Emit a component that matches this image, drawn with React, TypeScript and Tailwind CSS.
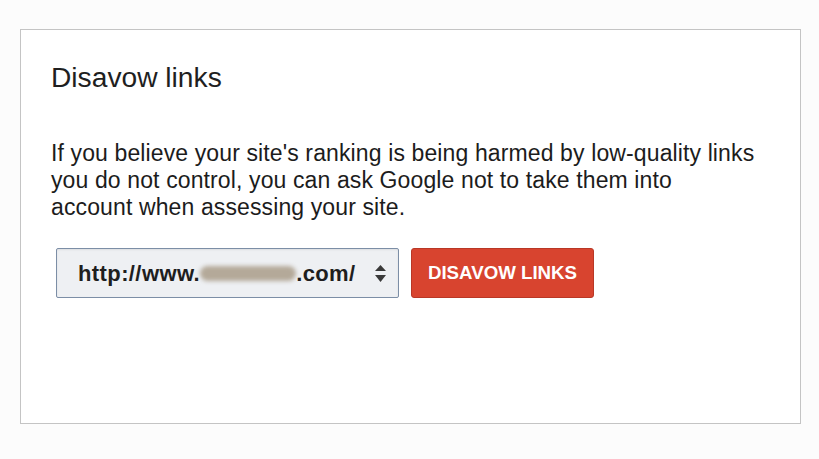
import React from "react";

function SortArrows() {
  return (
    <svg width="11" height="17" viewBox="0 0 11 17" className="shrink-0">
      <path d="M5.5 0 L11 6 L0 6 Z" fill="#3a3a3a" />
      <path d="M0 10 L11 10 L5.5 17 Z" fill="#3a3a3a" />
    </svg>
  );
}

export default function App() {
  return (
    <div
      className="w-[819px] h-[459px] bg-[#fcfcfc] pl-[20px] pt-[29px]"
      style={{ fontFamily: '"Liberation Sans", Arial, sans-serif' }}
    >
      <div className="w-[781px] h-[395px] bg-white border border-[#c4c4c4] pl-[30px] pt-[31px]">
        <h1 className="text-[28.2px] leading-[32px] text-[#1f1f1f]">Disavow links</h1>

        <p className="mt-[47px] text-[23px] leading-[27px] tracking-[0.12px] text-[#1c1c1c] whitespace-nowrap">
          If you believe your site's ranking is being harmed by low-quality links
          <br />
          you do not control, you can ask Google not to take them into
          <br />
          account when assessing your site.
        </p>

        <div className="mt-[27px] ml-[5px] flex items-center gap-[12px]">
          <div className="w-[343px] h-[50px] flex items-center justify-between pl-[21px] pr-[12px] bg-[#eef0f3] border border-[#7c8ea6] rounded-[2px] shadow-[inset_0_1px_2px_rgba(0,0,0,0.08)]">
            <span className="flex items-center text-[22px] font-bold tracking-[0.4px] text-[#1e1e1e]">
              http://www.
              <span className="inline-block w-[96px] h-[15px] rounded-full bg-[#b4a999] blur-[2px]" />
              .com/
            </span>
            <SortArrows />
          </div>
          <button className="w-[183px] h-[50px] bg-[#d8442f] border border-[#b93826] rounded-[3px] text-white text-[18.7px] font-bold">
            DISAVOW LINKS
          </button>
        </div>
      </div>
    </div>
  );
}
